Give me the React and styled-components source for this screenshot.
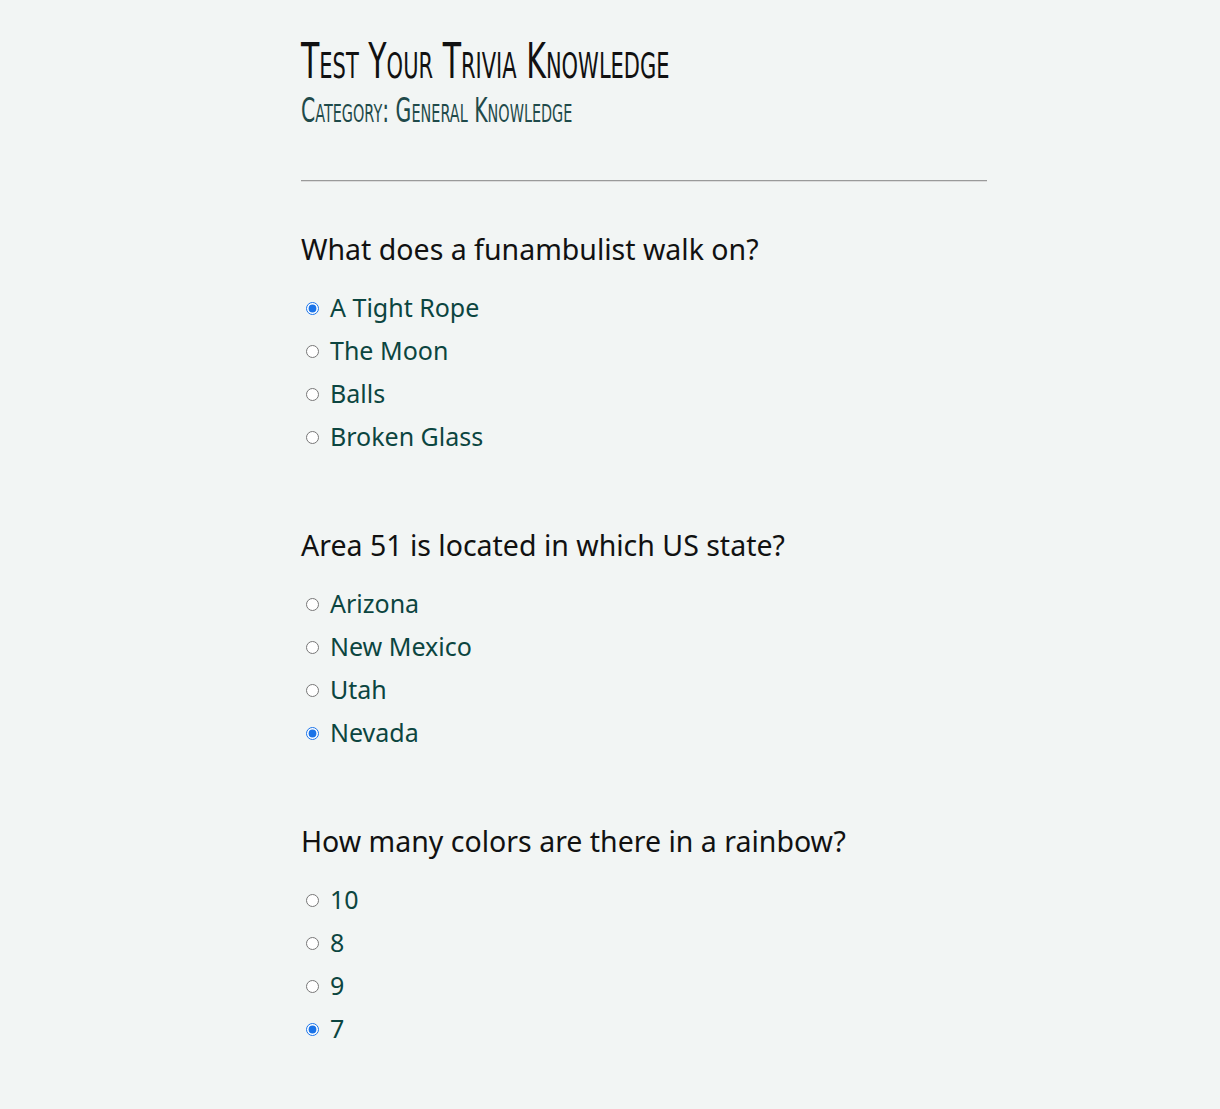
import React, { useState } from "react";
import styled, { createGlobalStyle } from "styled-components";

const Global = createGlobalStyle`
  html, body { margin: 0; padding: 0; background: #f2f5f4; }
  body { font-family: "Noto Sans", sans-serif; }
`;

const Page = styled.main`
  min-height: 1109px;
  box-sizing: border-box;
  padding: 32px 0 40px 301px;
`;

const Container = styled.div`
  width: 686px;
`;

const Title = styled.h1`
  margin: 0;
  font-family: "DejaVu Sans", sans-serif;
  font-variant: small-caps;
  font-weight: 400;
  font-size: 50px;
  line-height: 58px;
  color: #111;
  white-space: nowrap;
  transform: scaleX(0.6);
  transform-origin: left center;
`;

const Subtitle = styled.h2`
  margin: 0;
  font-family: "DejaVu Sans", sans-serif;
  font-variant: small-caps;
  font-weight: 400;
  font-size: 34px;
  line-height: 40px;
  color: #1f4a4a;
  white-space: nowrap;
  transform: scaleX(0.6);
  transform-origin: left center;
`;

const Rule = styled.hr`
  margin: 50px 0 0;
  border: 0;
  border-top: 1px solid #9a9a9a;
  border-bottom: 1px solid #dcdcdc;
`;

const Questions = styled.div`
  display: flex;
  flex-direction: column;
  gap: 68px;
  padding-top: 47px;
`;

const Block = styled.fieldset`
  margin: 0;
  padding: 0;
  border: 0;
  display: flex;
  flex-direction: column;
`;

const Question = styled.legend`
  padding: 0;
  margin: 0 0 16px;
  font-family: "Noto Sans", sans-serif;
  font-size: 28.5px;
  line-height: 40px;
  color: #111;
`;

const Answer = styled.label`
  display: flex;
  align-items: center;
  height: 43px;
  font-family: "Noto Sans", sans-serif;
  font-size: 25px;
  color: #0c4540;
  cursor: pointer;
`;

const Radio = styled.input`
  width: 13px;
  height: 13px;
  margin: 4px 11px 0 5px;
  accent-color: #1a73e8;
`;

const data = [
  { q: "What does a funambulist walk on?", a: ["A Tight Rope", "The Moon", "Balls", "Broken Glass"], s: 0 },
  { q: "Area 51 is located in which US state?", a: ["Arizona", "New Mexico", "Utah", "Nevada"], s: 3 },
  { q: "How many colors are there in a rainbow?", a: ["10", "8", "9", "7"], s: 3 },
];

export default function App() {
  const [sel, setSel] = useState(data.map((d) => d.s));
  return (
    <Page>
      <Global />
      <Container>
        <Title>Test Your Trivia Knowledge</Title>
        <Subtitle>Category: General Knowledge</Subtitle>
        <Rule />
        <Questions>
          {data.map((d, i) => (
            <Block key={i}>
              <Question>{d.q}</Question>
              {d.a.map((ans, j) => (
                <Answer key={j}>
                  <Radio
                    type="radio"
                    name={`q${i}`}
                    checked={sel[i] === j}
                    onChange={() => setSel((p) => p.map((v, k) => (k === i ? j : v)))}
                  />
                  {ans}
                </Answer>
              ))}
            </Block>
          ))}
        </Questions>
      </Container>
    </Page>
  );
}
